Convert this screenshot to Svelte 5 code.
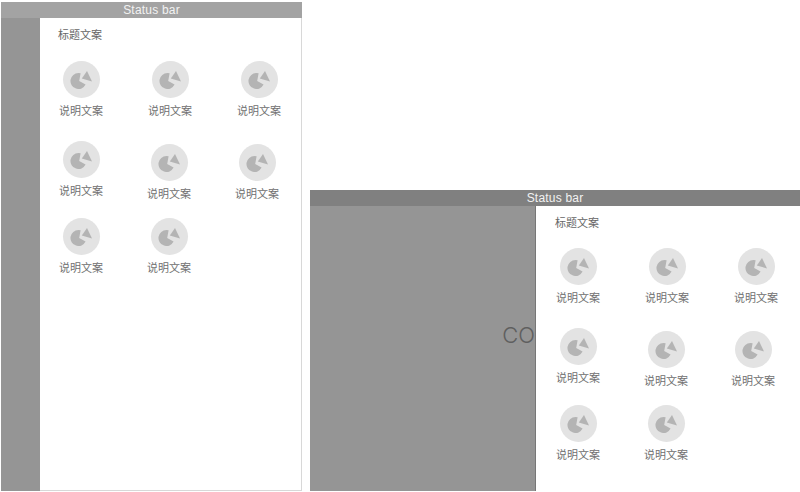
<script>
  const screens = [
    {
      name: "left",
      rows: [
        [{ x: 0, y: 0 }, { x: 0, y: 0 }, { x: 0, y: 0 }],
        [{ x: 0, y: 0 }, { x: -1, y: 3 }, { x: -2, y: 3 }],
        [{ x: 0, y: 0 }, { x: -1, y: 0 }],
      ],
    },
    {
      name: "right",
      note: "CO",
      rows: [
        [{ x: 0, y: 0 }, { x: 0, y: 0 }, { x: 0, y: 0 }],
        [{ x: 0, y: 0 }, { x: -1, y: 3 }, { x: -3, y: 3 }],
        [{ x: 0, y: 0 }, { x: -1, y: 0 }],
      ],
    },
  ];
</script>

<div class="page">
  {#each screens as screen}
    <section class="frame {screen.name}">
      <header class="status">Status bar</header>
      <div class="body">
        <aside class="side">
          {#if screen.note}<span class="note">{screen.note}</span>{/if}
        </aside>
        <main class="panel">
          <h2 class="title">标题文案</h2>
          {#each screen.rows as row}
            <div class="row">
              {#each row as item}
                <div class="item" style="transform: translate({item.x}px, {item.y}px)">
                  <div class="circle">
                    <svg viewBox="0 0 22 18" width="22" height="18">
                      <path d="M8.5 2A8 8 0 1 0 15.6 13.6L9.2 10L10.6 2.3A8 8 0 0 0 8.5 2Z" />
                      <path d="M17 0L22 10.4L11.8 7.4Z" />
                    </svg>
                  </div>
                  <span class="label">说明文案</span>
                </div>
              {/each}
            </div>
          {/each}
        </main>
      </div>
    </section>
  {/each}
</div>

<style>
  :global(body) {
    background: #fff;
  }
  .page {
    width: 800px;
    height: 492px;
    display: flex;
    align-items: flex-end;
    padding: 0 0 1px 1px;
    box-sizing: border-box;
    overflow: hidden;
    font-family: "Noto Sans CJK SC", "Liberation Sans", sans-serif;
  }
  .frame {
    display: flex;
    flex-direction: column;
  }
  .left {
    width: 301px;
    height: 489px;
    margin-right: 8px;
  }
  .right {
    width: 490px;
    height: 301px;
  }
  .status {
    height: 16px;
    flex: none;
    background: #a3a3a3;
    color: #f2f2f2;
    font: 12px/16px "Liberation Sans", sans-serif;
    letter-spacing: 0.2px;
    text-align: center;
  }
  .right .status {
    background: #808080;
  }
  .body {
    flex: 1;
    display: flex;
    min-height: 0;
  }
  .side {
    background: #959595;
    display: flex;
    align-items: center;
    justify-content: flex-end;
  }
  .left .side {
    width: 39px;
  }
  .right .side {
    width: 225px;
  }
  .note {
    font: 300 22px Inter, "Liberation Sans", sans-serif;
    color: #5f5f5f;
    margin: 0 0 28px 0;
  }
  .panel {
    flex: 1;
    background: #fff;
    padding: 8px 0 0 19px;
    box-sizing: border-box;
  }
  .left .panel {
    border-right: 1px solid #d8d8d8;
    border-bottom: 1px solid #d8d8d8;
  }
  .right .panel {
    border-left: 1px solid #777;
    padding-left: 20px;
  }
  .title {
    margin: 0 0 19px -1px;
    font-size: 11px;
    font-weight: 400;
    line-height: 16px;
    color: #666;
  }
  .right .title {
    margin-bottom: 18px;
  }
  .row {
    display: flex;
    gap: 45px;
    height: 77px;
  }
  .row:nth-of-type(1) {
    height: 80px;
  }
  .item {
    width: 44px;
    display: flex;
    flex-direction: column;
    align-items: center;
  }
  .circle {
    width: 37px;
    height: 37px;
    border-radius: 50%;
    background: #e3e3e3;
    display: flex;
    align-items: center;
    justify-content: center;
    margin-bottom: 4px;
  }
  .circle svg {
    fill: #b4b4b4;
  }
  .label {
    font-size: 11px;
    line-height: 16px;
    color: #707070;
    white-space: nowrap;
  }
</style>
